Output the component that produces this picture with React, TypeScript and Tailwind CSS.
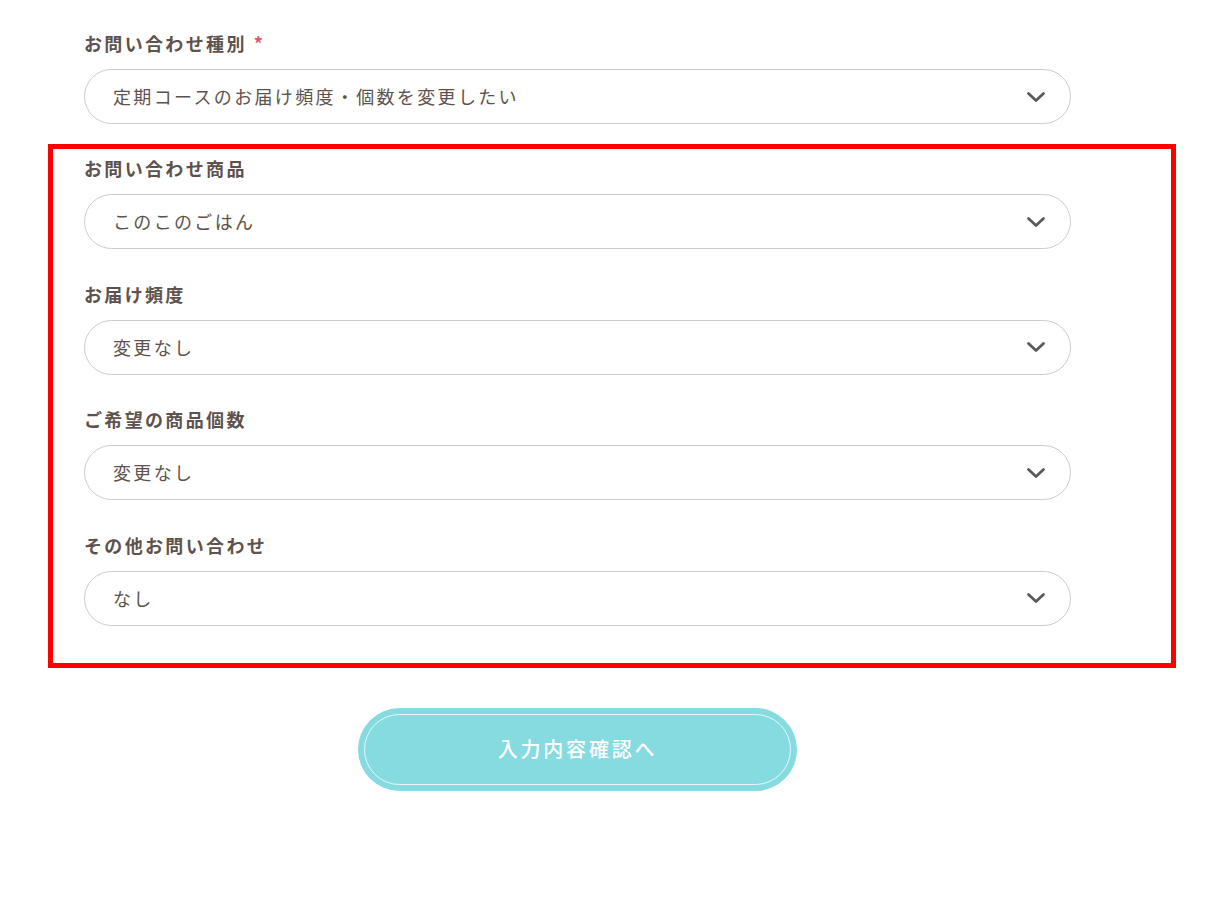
import React from 'react';

const font = { fontFamily: '"Noto Sans CJK JP", "Noto Sans", sans-serif' };

function Chevron() {
  return (
    <svg className="absolute right-[24px] top-1/2 -translate-y-1/2" width="20" height="12" viewBox="0 0 20 12" fill="none">
      <path d="M2.5 2.5l7.5 7 7.5-7" stroke="#5a5a5a" strokeWidth="2.8" strokeLinecap="round" strokeLinejoin="round" />
    </svg>
  );
}

function Field({ label, value, required }: { label: string; value: string; required?: boolean }) {
  return (
    <div className="w-[987px]">
      <div className="text-[18px] leading-[24px] font-bold tracking-[0.13em] text-[#5d524d] mb-[14px]">
        {label}
        {required && <span className="ml-[7px] text-[#e9546b]">*</span>}
      </div>
      <div className="relative h-[55px] rounded-full border border-[#cccccc] bg-white flex items-center pl-[28px]">
        <span className="text-[18px] tracking-[0.13em] text-[#5d524d]">{value}</span>
        <Chevron />
      </div>
    </div>
  );
}

export default function App() {
  return (
    <div className="min-h-screen bg-white pt-[31px] px-[48px]" style={font}>
      <div className="ml-[36px]">
        <Field label="お問い合わせ種別" value="定期コースのお届け頻度・個数を変更したい" required />
      </div>

      {/* highlighted block */}
      <div className="mt-[20px] w-[1128px] border-[5px] border-[#ff0000] pt-[7px] pb-[37px] px-[31px] flex flex-col gap-[32.6px]">
        <Field label="お問い合わせ商品" value="このこのごはん" />
        <Field label="お届け頻度" value="変更なし" />
        <Field label="ご希望の商品個数" value="変更なし" />
        <Field label="その他お問い合わせ" value="なし" />
      </div>

      <div className="mt-[40px] ml-[310px] w-[439px] h-[83px] rounded-full bg-[#86dbe1] p-[6px]">
        <div className="h-full rounded-full border border-[#e6f8f9] flex items-center justify-center">
          <span className="text-[20px] font-medium tracking-[0.14em] text-white">入力内容確認へ</span>
        </div>
      </div>
    </div>
  );
}
